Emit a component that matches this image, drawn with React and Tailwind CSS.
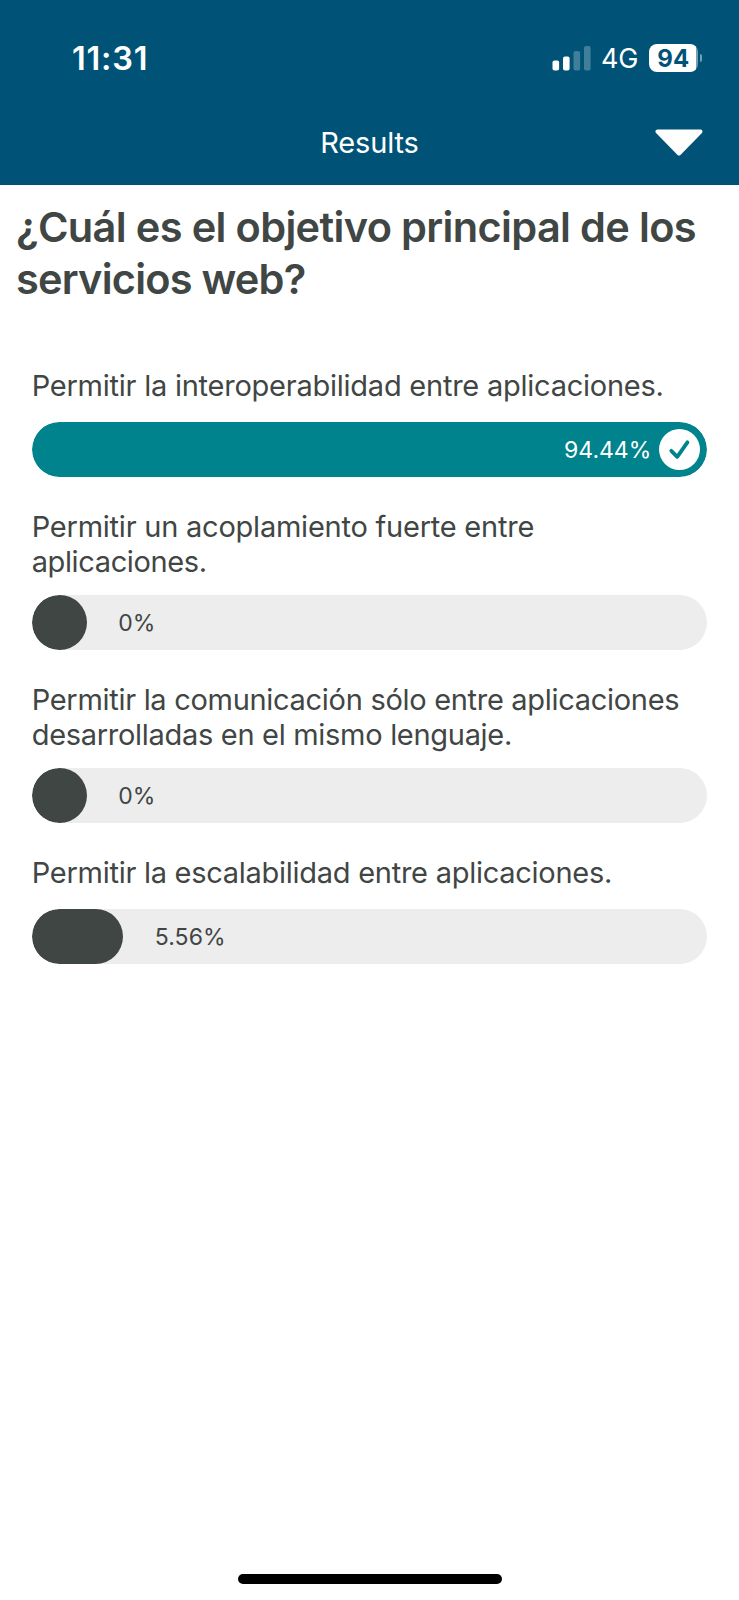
const question = [
  { text: '¿Cuál es el objetivo principal de los', tracking: 'tracking-[-0.65px]' },
  { text: 'servicios web?', tracking: 'tracking-[-0.78px]' },
];

const answers = [
  {
    lines: [{ text: 'Permitir la interoperabilidad entre aplicaciones.', tracking: 'tracking-[-0.24px]' }],
    percent: '94.44%',
    correct: true,
  },
  {
    lines: [
      { text: 'Permitir un acoplamiento fuerte entre', tracking: 'tracking-[-0.23px]' },
      { text: 'aplicaciones.', tracking: 'tracking-[-0.38px]' },
    ],
    percent: '0%',
    width: 55,
  },
  {
    lines: [
      { text: 'Permitir la comunicación sólo entre aplicaciones', tracking: 'tracking-[-0.3px]' },
      { text: 'desarrolladas en el mismo lenguaje.', tracking: 'tracking-[-0.3px]' },
    ],
    percent: '0%',
    width: 55,
  },
  {
    lines: [{ text: 'Permitir la escalabilidad entre aplicaciones.', tracking: 'tracking-[-0.27px]' }],
    percent: '5.56%',
    width: 91.5,
  },
];

function Signal() {
  return (
    <svg width="40" height="26" viewBox="0 0 40 26" fill="white" className="shrink-0">
      <rect x="0.5" y="15.5" width="6.6" height="10" rx="2" />
      <rect x="11" y="11.5" width="6.6" height="14" rx="2" />
      <rect x="21.5" y="6" width="6.6" height="19.5" rx="2" opacity="0.25" />
      <rect x="32" y="1" width="6.6" height="24.5" rx="2" opacity="0.25" />
    </svg>
  );
}

function Battery() {
  return (
    <div className="ml-[10px] flex items-center">
      <div className="flex h-[28px] w-[49.5px] items-center justify-center overflow-hidden rounded-[8px] bg-linear-to-r from-white from-95% to-white/45 to-95% pt-[2px] text-[24px] leading-[28px] font-bold text-[#005377]">
        94
      </div>
      <div className="ml-[1.5px] h-[8px] w-[2.5px] rounded-r-full bg-white/45" />
    </div>
  );
}

function Answer({ answer }) {
  return (
    <li className="flex flex-col gap-[15.4px]">
      <p className="min-h-[38.9px] text-[29px] leading-[35.6px] whitespace-nowrap">
        {answer.lines.map((line) => (
          <span key={line.text} className={`block ${line.tracking}`}>{line.text}</span>
        ))}
      </p>
      <div className="flex h-[55px] items-center overflow-hidden rounded-full bg-[#ededed]">
        {answer.correct ? (
          <div className="flex h-full w-full items-center justify-end gap-[8px] rounded-full bg-[#00838c] pr-[7px] text-white">
            <span className="text-[23px] leading-[28px]">{answer.percent}</span>
            <svg width="41" height="41" viewBox="0 0 41 41" className="shrink-0">
              <circle cx="20.5" cy="20.5" r="20.5" fill="white" />
              <path d="M12.3 21.8 18.2 27.8 28.4 13.3" fill="none" stroke="#00838c" strokeWidth="3.8" strokeLinecap="round" strokeLinejoin="round" />
            </svg>
          </div>
        ) : (
          <>
            <div className="h-full rounded-full bg-[#3f4644]" style={{ width: answer.width }} />
            <span className="ml-[31.5px] text-[23px] leading-[28px] tracking-[0.1px]">{answer.percent}</span>
          </>
        )}
      </div>
    </li>
  );
}

export default function App() {
  return (
    <div className="flex h-[1600px] w-[739px] flex-col bg-white font-['Inter',sans-serif] text-[#3f4644]">
      <header className="flex h-[185px] shrink-0 flex-col bg-[#005377] text-white">
        <div className="flex h-[116px] items-center justify-between pr-[37px] pl-[72px]">
          <span className="pt-[2px] text-[32.5px] font-semibold tracking-[0.8px]">11:31</span>
          <div className="flex items-center">
            <Signal />
            <span className="ml-[8.5px] pt-[2px] text-[27px]">4G</span>
            <Battery />
          </div>
        </div>
        <div className="grid h-[52px] grid-cols-3 items-center">
          <span />
          <h2 className="pt-px text-center text-[29px] tracking-[-0.15px]">Results</h2>
          <svg width="48" height="27" viewBox="0 0 48 27" className="mr-[35.5px] justify-self-end">
            <path d="M2.5 2.5H45.5L24 24.5Z" fill="white" stroke="white" strokeWidth="4" strokeLinejoin="round" />
          </svg>
        </div>
      </header>
      <main className="flex flex-1 flex-col pt-[16px]">
        <h1 className="pl-[16px] text-[41.5px] leading-[52px] font-semibold whitespace-nowrap">
          {question.map((line) => (
            <span key={line.text} className={`block ${line.tracking}`}>{line.text}</span>
          ))}
        </h1>
        <ul className="mt-[62.8px] flex flex-col gap-[31.5px] px-[31.7px]">
          {answers.map((answer) => (
            <Answer key={answer.lines[0].text} answer={answer} />
          ))}
        </ul>
      </main>
      <footer className="flex h-[26px] shrink-0 justify-center">
        <div className="h-[10px] w-[264px] rounded-full bg-black" />
      </footer>
    </div>
  );
}
